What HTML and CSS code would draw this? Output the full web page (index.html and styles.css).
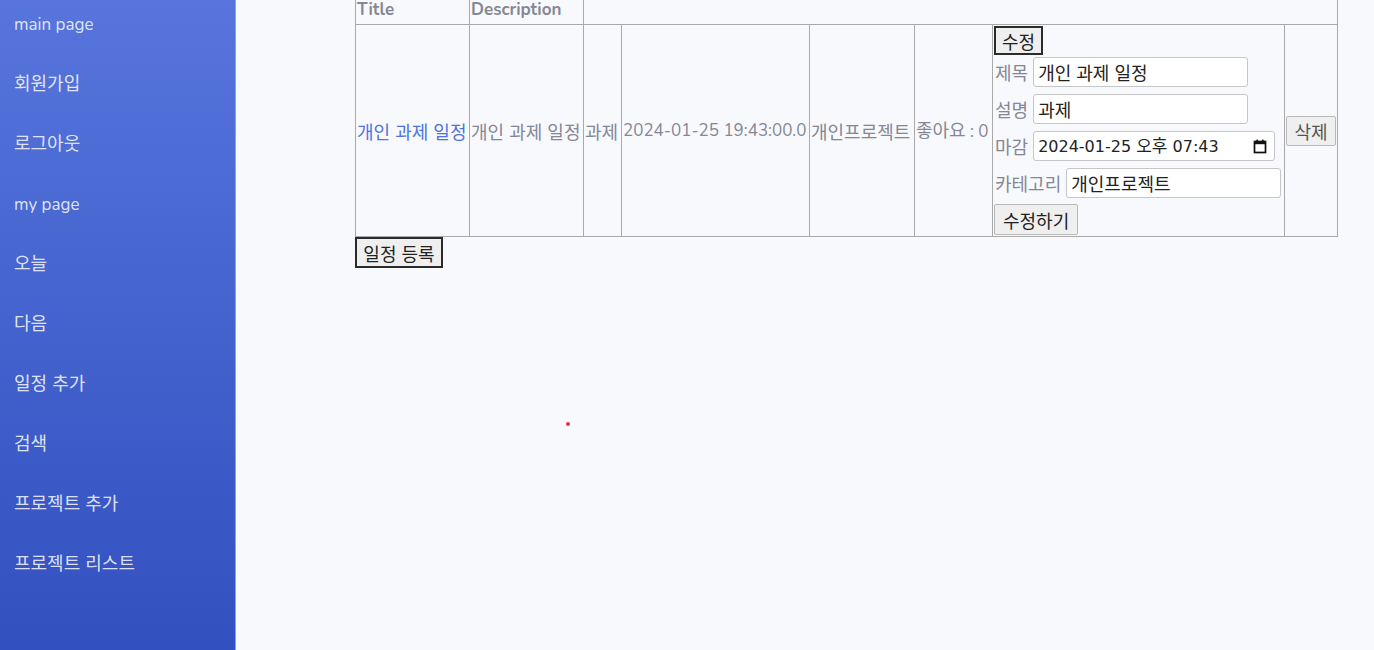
FILE: index.html
```html
<!DOCTYPE html>
<html lang="ko">
<head>
<meta charset="utf-8">
<title>일정 목록</title>
<link rel="stylesheet" href="styles.css">
</head>
<body>
<div class="layout">
  <nav class="sidebar">
    <a class="nav-link" href="#">main page</a>
    <a class="nav-link ko" href="#">회원가입</a>
    <a class="nav-link ko" href="#">로그아웃</a>
    <a class="nav-link" href="#">my page</a>
    <a class="nav-link ko" href="#">오늘</a>
    <a class="nav-link ko" href="#">다음</a>
    <a class="nav-link ko" href="#">일정 추가</a>
    <a class="nav-link ko" href="#">검색</a>
    <a class="nav-link ko" href="#">프로젝트 추가</a>
    <a class="nav-link ko" href="#">프로젝트 리스트</a>
  </nav>
  <main class="content">
    <table class="schedule">
      <colgroup>
        <col class="c-title"><col class="c-desc"><col class="c-memo"><col class="c-date">
        <col class="c-cat"><col class="c-like"><col class="c-form"><col class="c-del">
      </colgroup>
      <thead>
        <tr class="head-row">
          <th>Title</th>
          <th>Description</th>
          <th colspan="6"></th>
        </tr>
      </thead>
      <tbody>
        <tr class="body-row">
          <td class="ko"><a class="title-link" href="#">개인 과제 일정</a></td>
          <td class="ko">개인 과제 일정</td>
          <td class="ko">과제</td>
          <td>2024-01-25 19:43:00.0</td>
          <td class="ko">개인프로젝트</td>
          <td><span class="ko">좋아요</span> : 0</td>
          <td class="form-cell">
            <div class="edit-form">
              <button class="btn btn-dark">수정</button>
              <div class="field field-first"><span class="lbl ko">제목</span><input class="inp" type="text" value="개인 과제 일정"></div>
              <div class="field"><span class="lbl ko">설명</span><input class="inp" type="text" value="과제"></div>
              <div class="field"><span class="lbl ko">마감</span><div class="inp inp-date"><span class="date-text"><span class="num">2024-01-25</span> <span class="date-ko">오후</span> <span class="num">07:43</span></span><svg class="cal" width="14" height="15" viewBox="0 0 14 15"><rect x="1.5" y="2.5" width="11" height="11" fill="none" stroke="#111" stroke-width="1.7"/><rect x="1" y="2" width="12" height="3.2" fill="#111"/><rect x="3.4" y="0.6" width="1.6" height="2" fill="#111"/><rect x="9" y="0.6" width="1.6" height="2" fill="#111"/></svg></div></div>
              <div class="field"><span class="lbl ko">카테고리</span><input class="inp" type="text" value="개인프로젝트"></div>
              <button class="btn btn-light btn-submit">수정하기</button>
            </div>
          </td>
          <td class="del-cell"><button class="btn btn-light btn-del">삭제</button></td>
        </tr>
      </tbody>
    </table>
    <button class="btn btn-dark btn-add">일정 등록</button>
    <span class="dot"></span>
  </main>
</div>
</body>
</html>
```
FILE: styles.css
```css
html, body {
  margin: 0;
  padding: 0;
  height: 100%;
}
body {
  font-family: "Nunito", "Open Sans", "Noto Sans CJK KR", sans-serif;
  font-size: 17px;
  line-height: 1.5;
  color: #858796;
  background: #f8f9fc;
  overflow: hidden;
}
.ko {
  font-family: "Noto Sans CJK KR", sans-serif;
  font-size: 18px;
}
.layout {
  display: flex;
  height: 650px;
}
.sidebar {
  width: 235px;
  flex: none;
  border-right: 1px solid #8aa0ea;
  background: linear-gradient(180deg, #5775dc 0%, #3250bf 100%);
  display: flex;
  flex-direction: column;
  padding-top: 12px;
}
.nav-link {
  display: block;
  height: 60px;
  padding: 0 14px;
  line-height: 26px;
  color: rgba(255, 255, 255, 0.84);
  text-decoration: none;
  font-size: 17px;
  white-space: nowrap;
}
.nav-link.ko {
  font-size: 18px;
  line-height: 20px;
}
.content {
  flex: 1;
  position: relative;
  padding-left: 119px;
}
.schedule {
  border-collapse: collapse;
  table-layout: fixed;
  width: 983px;
  margin-top: -5px;
}
.c-title { width: 114px; }
.c-desc { width: 114px; }
.c-memo { width: 38px; }
.c-date { width: 188px; }
.c-cat { width: 105px; }
.c-like { width: 78px; }
.c-form { width: 292px; }
.c-del { width: 53px; }
.schedule th,
.schedule td {
  border: 1px solid #a9a9a9;
  padding: 1px;
  white-space: nowrap;
  overflow: visible;
}
.schedule th {
  text-align: left;
  font-weight: 700;
  height: 26px;
  line-height: 26px;
}
.body-row td {
  vertical-align: middle;
  line-height: 24px;
}
.title-link {
  color: #4e73df;
  text-decoration: none;
}
.edit-form {
  display: flex;
  flex-direction: column;
  align-items: flex-start;
}
.btn {
  font-family: "Noto Sans CJK KR", sans-serif;
  font-size: 18px;
  line-height: 1;
  background: #efefef;
  color: #222;
  margin: 0;
  cursor: pointer;
}
.btn-dark {
  border: 2px solid #2b2b2b;
  border-radius: 0;
  height: 29px;
  padding: 0 6px;
}
.btn-light {
  border: 1px solid #b9b9b9;
  border-radius: 2px;
  height: 31px;
  padding: 0 8px;
}
.field {
  display: flex;
  align-items: center;
  margin-top: 7px;
  height: 30px;
}
.field-first {
  margin-top: 2px;
}
.lbl {
  margin-left: 1px;
  margin-right: 5px;
  line-height: 30px;
}
.inp {
  box-sizing: border-box;
  height: 30px;
  width: 215px;
  border: 1px solid #c6c6c6;
  border-radius: 3px;
  background: #fff;
  color: #222;
  font-family: "Noto Sans CJK KR", sans-serif;
  font-size: 18px;
  padding: 0 4px;
  margin: 0;
}
.inp-date {
  width: 242px;
  display: flex;
  align-items: center;
  justify-content: space-between;
  padding-right: 7px;
}
.date-text {
  white-space: nowrap;
  font-family: "DejaVu Sans", sans-serif;
  font-size: 16px;
}
.date-ko {
  font-family: "Noto Sans CJK KR", sans-serif;
  font-size: 17px;
}
.cal {
  display: block;
}
.btn-submit {
  margin-top: 6px;
}
.btn-del {
  height: 30px;
  width: 50px;
  padding: 0;
  color: #555;
}
.btn-add {
  height: 31px;
  width: 88px;
  padding: 0;
  display: block;
}
.dot {
  position: absolute;
  left: 330px;
  top: 422px;
  width: 4px;
  height: 4px;
  border-radius: 50%;
  background: #e53935;
}
```
